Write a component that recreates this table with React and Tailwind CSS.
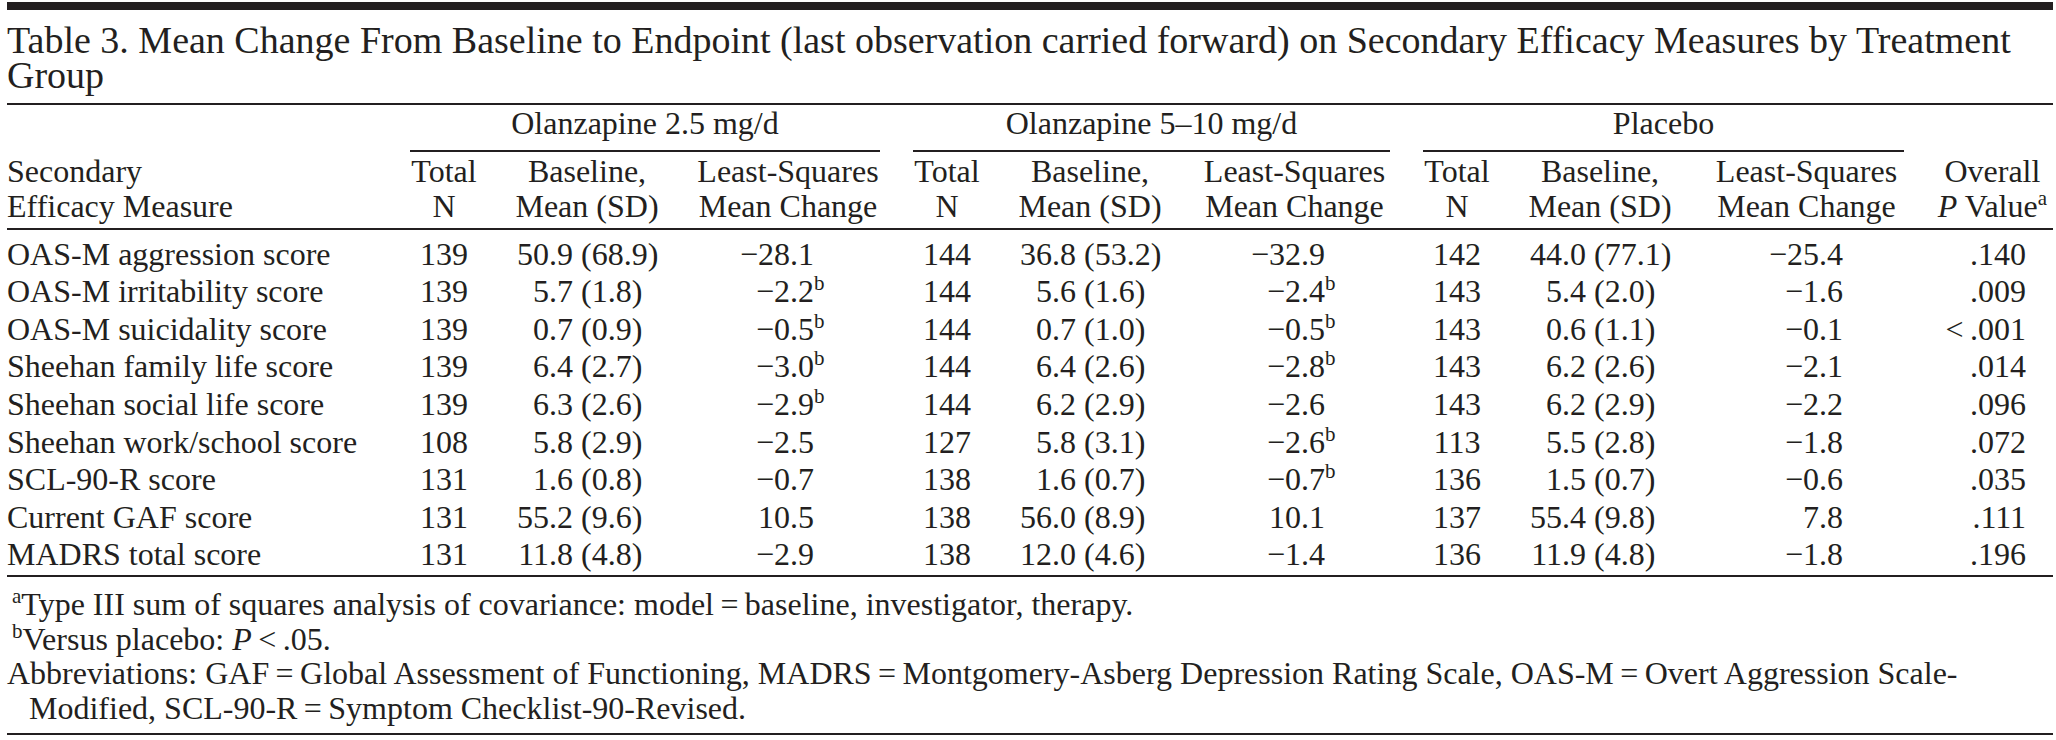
import React from "react";

const GRID =
  "grid grid-cols-[403px_68px_218px_184px_33px_68px_218px_191px_33px_68px_218px_195px_1fr]";

const rows = [
  ["OAS-M aggression score", "139", "50.9 (68.9)", "−28.1", "144", "36.8 (53.2)", "−32.9", "142", "44.0 (77.1)", "−25.4", ".140"],
  ["OAS-M irritability score", "139", "5.7 (1.8)", "−2.2b", "144", "5.6 (1.6)", "−2.4b", "143", "5.4 (2.0)", "−1.6", ".009"],
  ["OAS-M suicidality score", "139", "0.7 (0.9)", "−0.5b", "144", "0.7 (1.0)", "−0.5b", "143", "0.6 (1.1)", "−0.1", "<\u2009.001"],
  ["Sheehan family life score", "139", "6.4 (2.7)", "−3.0b", "144", "6.4 (2.6)", "−2.8b", "143", "6.2 (2.6)", "−2.1", ".014"],
  ["Sheehan social life score", "139", "6.3 (2.6)", "−2.9b", "144", "6.2 (2.9)", "−2.6", "143", "6.2 (2.9)", "−2.2", ".096"],
  ["Sheehan work/school score", "108", "5.8 (2.9)", "−2.5", "127", "5.8 (3.1)", "−2.6b", "113", "5.5 (2.8)", "−1.8", ".072"],
  ["SCL-90-R score", "131", "1.6 (0.8)", "−0.7", "138", "1.6 (0.7)", "−0.7b", "136", "1.5 (0.7)", "−0.6", ".035"],
  ["Current GAF score", "131", "55.2 (9.6)", "10.5", "138", "56.0 (8.9)", "10.1", "137", "55.4 (9.8)", "7.8", ".111"],
  ["MADRS total score", "131", "11.8 (4.8)", "−2.9", "138", "12.0 (4.6)", "−1.4", "136", "11.9 (4.8)", "−1.8", ".196"],
];

function Sup({ children }) {
  return <sup className="text-[21px] top-[-12px]">{children}</sup>;
}

function Baseline({ v }) {
  const i = v.indexOf(".");
  return (
    <div className="flex whitespace-nowrap">
      <span className="w-[71px] text-right">{v.slice(0, i)}</span>
      <span>{v.slice(i)}</span>
    </div>
  );
}

function LS({ v, w }) {
  let sup = false;
  let s = v;
  if (s.endsWith("b")) {
    sup = true;
    s = s.slice(0, -1);
  }
  const i = s.indexOf(".");
  return (
    <div className="flex whitespace-nowrap">
      <span className={w + " text-right"}>{s.slice(0, i)}</span>
      <span>
        {s.slice(i)}
        {sup && <Sup>b</Sup>}
      </span>
    </div>
  );
}

function Rule({ cls }) {
  return <div className={"h-[2px] bg-[#231f20] " + cls} />;
}

function GroupHead({ label }) {
  return (
    <div className="col-span-3 flex flex-col">
      <div className="text-center leading-[36.7px] whitespace-nowrap">{label}</div>
      <div className="mt-[8px] h-[2px] bg-[#231f20]" />
    </div>
  );
}

function SubHeads() {
  return (
    <>
      <div className="text-center">
        Total
        <br />N
      </div>
      <div className="text-center whitespace-nowrap">
        Baseline,
        <br />
        Mean (SD)
      </div>
      <div className="text-center whitespace-nowrap">
        Least-Squares
        <br />
        Mean Change
      </div>
    </>
  );
}

export default function App() {
  return (
    <div className="w-[2056px] h-[740px] overflow-hidden bg-white pl-[7px] pr-[3px] pt-[2px] text-[#231f20] font-['Liberation_Serif','Times_New_Roman',serif] text-[32px]">
      <div className="h-[8px] bg-[#231f20]" />
      <div className="mt-[13px] text-[38px] leading-[35px] whitespace-nowrap">
        Table 3. Mean Change From Baseline to Endpoint (last observation carried forward) on Secondary Efficacy Measures by Treatment
        <br />
        Group
      </div>
      <Rule cls="mt-[10px]" />

      {/* group header row */}
      <div className={GRID}>
        <div />
        <GroupHead label="Olanzapine 2.5 mg/d" />
        <div />
        <GroupHead label="Olanzapine 5–10 mg/d" />
        <div />
        <GroupHead label="Placebo" />
        <div />
      </div>

      {/* column header row */}
      <div className={GRID + " pt-[2px] leading-[35px]"}>
        <div className="whitespace-nowrap">
          Secondary
          <br />
          Efficacy Measure
        </div>
        <SubHeads />
        <div />
        <SubHeads />
        <div />
        <SubHeads />
        <div className="flex justify-end pr-[6px]">
          <div className="flex flex-col items-center whitespace-nowrap">
            <span>Overall</span>
            <span>
              <i>P</i> Value<Sup>a</Sup>
            </span>
          </div>
        </div>
      </div>
      <Rule cls="mt-[4px]" />

      {/* data rows */}
      <div className="pt-[6px]">
        {rows.map((r) => (
          <div key={r[0]} className={GRID + " leading-[37.6px]"}>
            <div className="whitespace-nowrap">{r[0]}</div>
            <div className="text-center">{r[1]}</div>
            <Baseline v={r[2]} />
            <LS v={r[3]} w="w-[94px]" />
            <div />
            <div className="text-center">{r[4]}</div>
            <Baseline v={r[5]} />
            <LS v={r[6]} w="w-[102px]" />
            <div />
            <div className="text-center">{r[7]}</div>
            <Baseline v={r[8]} />
            <LS v={r[9]} w="w-[110px]" />
            <div className="text-right pr-[27px] whitespace-nowrap">{r[10]}</div>
          </div>
        ))}
      </div>
      <Rule cls="mt-[1px]" />

      {/* footnotes */}
      <div className="pt-[10px] leading-[34.5px]">
        <div className="pl-[5px] whitespace-nowrap">
          <Sup>a</Sup>Type III sum of squares analysis of covariance: model{"\u2009=\u2009"}baseline, investigator, therapy.
        </div>
        <div className="pl-[5px] whitespace-nowrap">
          <Sup>b</Sup>Versus placebo: <i>P</i>
          {"\u2009<\u2009"}.05.
        </div>
        <div className="pl-[22px] indent-[-22px] whitespace-nowrap">
          Abbreviations: GAF{"\u2009=\u2009"}Global Assessment of Functioning, MADRS{"\u2009=\u2009"}Montgomery-Asberg Depression Rating Scale, OAS-M{"\u2009=\u2009"}Overt Aggression Scale-
          <br />
          Modified, SCL-90-R{"\u2009=\u2009"}Symptom Checklist-90-Revised.
        </div>
      </div>
      <Rule cls="mt-[8px]" />
    </div>
  );
}
